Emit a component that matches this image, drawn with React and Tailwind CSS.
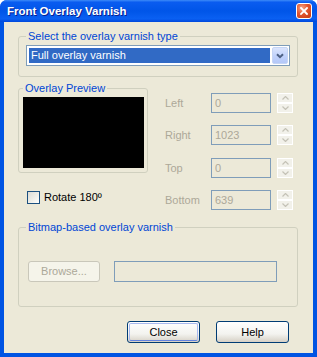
import React from "react";

function Spinner() {
  return (
    <div className="w-[16px] h-[20px] flex flex-col gap-[0px] ml-[6px]">
      {[0, 1].map((i) => (
        <div
          key={i}
          className="h-[10px] border border-white bg-[#f2f1ea] flex items-center justify-center"
        >
          <svg width="7" height="4" viewBox="0 0 7 4">
            {i === 0 ? (
              <path d="M0.5 3.5 L3.5 0.5 L6.5 3.5" fill="none" stroke="#c4c2b6" strokeWidth="1.2" />
            ) : (
              <path d="M0.5 0.5 L3.5 3.5 L6.5 0.5" fill="none" stroke="#c4c2b6" strokeWidth="1.2" />
            )}
          </svg>
        </div>
      ))}
    </div>
  );
}

function SpinRow({ label, value, first }) {
  return (
    <div className={"flex items-center h-[20px] " + (first ? "" : "mt-[12px]")}>
      <div className="w-[46px] text-[#aca899] leading-[13px]">{label}</div>
      <div className="w-[60px] h-[20px] border border-[#7f9db9] bg-[#ece9d8] text-[#aca899] pl-[3px] flex items-center leading-[13px]">
        {value}
      </div>
      <Spinner />
    </div>
  );
}

export default function App() {
  return (
    <div className="w-[317px] h-[357px] bg-[#0054e3] flex flex-col font-['Liberation_Sans',Arial,sans-serif] text-[11px] overflow-hidden rounded-t-[7px]">
      {/* Title bar */}
      <div className="h-[22px] shrink-0 flex items-center pl-[7px] pr-[5px] bg-[linear-gradient(180deg,#3d8bf8_0%,#0a5cf0_10%,#0055e8_50%,#0a60f2_85%,#0048dc_100%)]">
        <div className="flex-1 text-white font-bold text-[11.5px] leading-[14px] [text-shadow:1px_1px_#0a1f8f]">
          Front Overlay Varnish
        </div>
        <div className="w-[16px] h-[16px] rounded-[3px] border border-white bg-[radial-gradient(circle_at_35%_30%,#f7a78a_0%,#e2552e_45%,#c23a14_100%)] flex items-center justify-center">
          <svg width="8" height="8" viewBox="0 0 8 8">
            <path d="M1 1 L7 7 M7 1 L1 7" stroke="white" strokeWidth="1.8" strokeLinecap="square" />
          </svg>
        </div>
      </div>

      {/* Client area */}
      <div className="flex-1 mx-[4px] mb-[4px] bg-[#ece9d8] flex flex-col pl-[14px]">
        {/* Group 1 */}
        <fieldset className="mt-[8px] w-[280px] border border-[#d0d0bf] rounded-[3px] pl-[7px] pr-[7px] pt-[2px] pb-[10px]">
          <legend className="px-[2px] text-[#0046d5] leading-[13px]">Select the overlay varnish type</legend>
          <div className="w-[264px] h-[21px] border border-[#7f9db9] bg-white flex items-stretch p-[1px]">
            <div className="flex-1 m-[1px] bg-[#316ac5] text-white pl-[2px] flex items-center leading-[13px]">
              Full overlay varnish
            </div>
            <div className="w-[16px] ml-[1px] rounded-[2px] border border-[#c5d5f5] bg-[linear-gradient(180deg,#dbe5fd_0%,#c2d3fc_50%,#b4c8f8_100%)] flex items-center justify-center">
              <svg width="8" height="6" viewBox="0 0 8 6">
                <path d="M1 1.2 L4 4.2 L7 1.2" fill="none" stroke="#4d6185" strokeWidth="2" />
              </svg>
            </div>
          </div>
        </fieldset>

        {/* Middle row */}
        <div className="flex items-start mt-[5px]">
          <div className="flex flex-col w-[130px]">
            <fieldset className="w-[130px] border border-[#d0d0bf] rounded-[3px] pl-[4px] pr-[3px] pt-[2px] pb-[4px]">
              <legend className="ml-[0px] px-[2px] text-[#0046d5] leading-[13px]">Overlay Preview</legend>
              <div className="w-[121px] h-[71px] bg-black" />
            </fieldset>
            <div className="mt-[18px] ml-[9px] flex items-center h-[13px]">
              <div className="w-[13px] h-[13px] border border-[#1c5180] bg-[linear-gradient(135deg,#dcdcd5_0%,#f0f0ea_60%,#ffffff_100%)]" />
              <span className="ml-[4px] leading-[13px] text-black">Rotate 180º</span>
            </div>
          </div>
          <div className="ml-[17px] mt-[11px] flex flex-col">
            <SpinRow label="Left" value="0" first />
            <SpinRow label="Right" value="1023" />
            <div className="mt-[1px]" />
            <SpinRow label="Top" value="0" />
            <SpinRow label="Bottom" value="639" />
          </div>
        </div>

        {/* Group 3 */}
        <fieldset className="mt-[11px] w-[280px] border border-[#d0d0bf] rounded-[3px] pl-[7px] pr-[7px] pt-[27px] pb-[24px]">
          <legend className="px-[2px] text-[#0046d5] leading-[13px]">Bitmap-based overlay varnish</legend>
          <div className="flex items-center">
            <div className="ml-[2px] w-[72px] h-[21px] rounded-[3px] border border-[#c9c7ba] bg-[#f5f4ea] text-[#aca899] flex items-center justify-center leading-[13px]">
              Browse...
            </div>
            <div className="ml-[14px] w-[163px] h-[21px] border border-[#7f9db9] bg-[#ece9d8]" />
          </div>
        </fieldset>

        {/* Buttons */}
        <div className="mt-[14px] flex">
          <div className="ml-[109px] w-[73px] h-[22px] rounded-[3px] border border-[#003c74] bg-[linear-gradient(180deg,#ffffff_0%,#f3f3ef_60%,#d6d0c5_100%)] p-[1px]">
            <div className="w-full h-full rounded-[2px] border border-[#a8b9ef] border-b-[#6382e0] flex items-center justify-center leading-[13px] text-black">
              Close
            </div>
          </div>
          <div className="ml-[16px] w-[73px] h-[22px] rounded-[3px] border border-[#003c74] bg-[linear-gradient(180deg,#ffffff_0%,#f3f3ef_60%,#d6d0c5_100%)] flex items-center justify-center leading-[13px] text-black">
            Help
          </div>
        </div>
      </div>
    </div>
  );
}
